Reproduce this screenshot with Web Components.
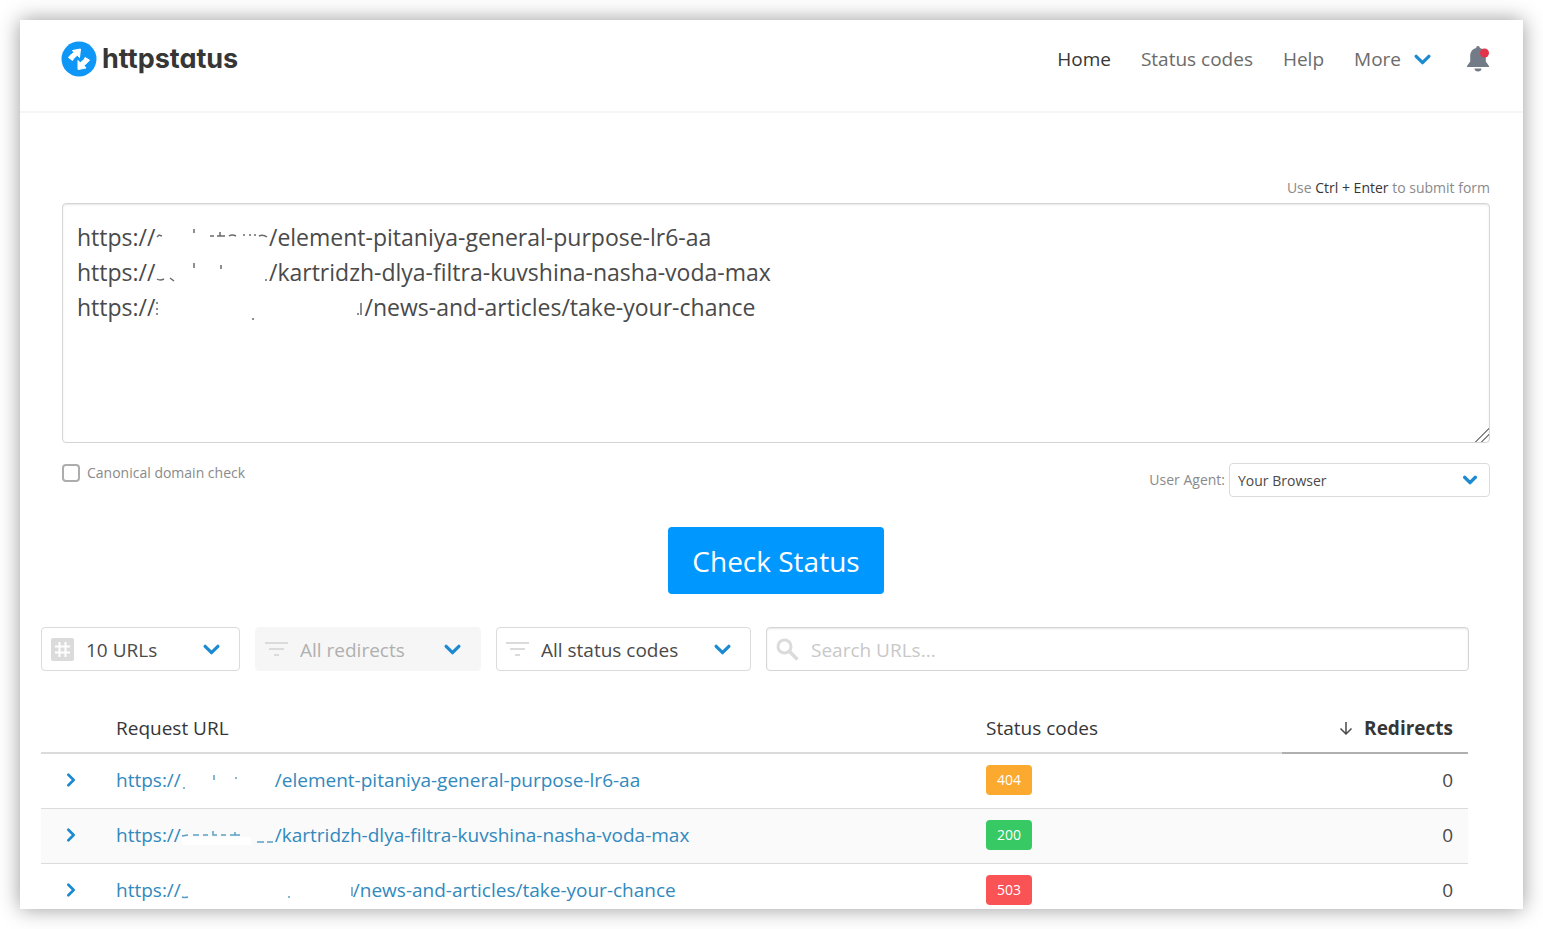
<!DOCTYPE html>
<html lang="en">
<head>
    <meta charset="UTF-8">
    <meta name="viewport" content="width=device-width, initial-scale=1.0">
    <title>httpstatus</title>
    <style>
        body {
            margin: 0;
            background: #fff;
            color: #4a4a4a;
            font-family: "Open Sans", "Noto Sans", sans-serif;
        }
    </style>
</head>
<body>
    <page-card>
        <site-header slot="header">
            <nav-link current>Home</nav-link>
            <nav-link>Status codes</nav-link>
            <nav-link>Help</nav-link>
            <nav-link more>More</nav-link>
        </site-header>
        <url-form></url-form>
        <filter-bar></filter-bar>
        <result-table></result-table>
    </page-card>

    <script>
        const chevron = (size, width = 3) => `
            <svg class="chevron" width="${size}" height="${size}" viewBox="0 0 16 16" fill="none" stroke="#1c8ad0" stroke-width="${width}" stroke-linecap="round" stroke-linejoin="round" aria-hidden="true">
                <path d="M2 5l6 6 6-6"/>
            </svg>`;

        const icons = {
            hash: `
                <svg width="23" height="23" viewBox="0 0 23 23" aria-hidden="true">
                    <rect width="23" height="23" rx="2" fill="#dbdbdb"/>
                    <path d="M8.5 4v15M14.5 4v15M4 8.5h15M4 14.5h15" stroke="#fff" stroke-width="2"/>
                </svg>`,
            filter: `
                <svg width="23" height="23" viewBox="0 0 23 23" stroke="#dbdbdb" stroke-width="2" aria-hidden="true">
                    <path d="M0 5h23M4 11h15M9 17h5"/>
                </svg>`,
            search: `
                <svg width="23" height="23" viewBox="0 0 23 23" fill="none" stroke="#dbdbdb" aria-hidden="true">
                    <circle cx="8.5" cy="8.5" r="6.5" stroke-width="3"/>
                    <path d="M13.5 13.5l8 8" stroke-width="3.5"/>
                </svg>`
        };

        class PageCard extends HTMLElement {
            constructor() {
                super();
                this.attachShadow({mode: 'open'}).innerHTML = `
                <style>
                    :host {
                        display: block;
                        box-sizing: border-box;
                        height: 100vh;
                        padding: 20px;
                        overflow: hidden;
                    }
                    .card {
                        height: 100%;
                        overflow: hidden;
                        background: #fff;
                    }
                    .shadow {
                        height: 100%;
                        box-shadow: 0 0 20px rgba(0, 0, 0, 0.4);
                    }
                </style>
                <div class="shadow">
                    <div class="card">
                        <slot name="header"></slot>
                        <main><slot></slot></main>
                    </div>
                </div>`;
            }
        }
        customElements.define('page-card', PageCard);

        class NavLink extends HTMLElement {
            constructor() {
                super();
                this.attachShadow({mode: 'open'}).innerHTML = `
                <style>
                    :host {
                        display: block;
                    }
                    a {
                        display: flex;
                        align-items: center;
                        gap: 13px;
                        color: #6b6b6b;
                        font-size: 19px;
                        line-height: 28px;
                        text-decoration: none;
                    }
                    :host([current]) a {
                        color: #363636;
                    }
                </style>
                <a href="#"><slot></slot>${this.hasAttribute('more') ? chevron(17) : ''}</a>`;
            }
        }
        customElements.define('nav-link', NavLink);

        class SiteHeader extends HTMLElement {
            constructor() {
                super();
                this.attachShadow({mode: 'open'}).innerHTML = `
                <style>
                    :host {
                        display: block;
                        border-bottom: 2px solid #f5f5f5;
                    }
                    header {
                        display: flex;
                        align-items: center;
                        justify-content: space-between;
                        padding: 18px 33px 31px 41px;
                    }
                    .logo {
                        display: flex;
                        align-items: center;
                        gap: 5px;
                        color: #363636;
                        font: 700 27px/42px Inter, sans-serif;
                        font-feature-settings: "cv11";
                        text-decoration: none;
                    }
                    nav {
                        display: flex;
                        align-items: center;
                        gap: 30px;
                    }
                    button {
                        display: block;
                        margin-left: 5px;
                        padding: 0;
                        border: 0;
                        background: none;
                    }
                    button svg {
                        display: block;
                    }
                </style>
                <header>
                    <a class="logo" href="#">
                        <svg width="36" height="36" viewBox="0 0 36 36" aria-hidden="true">
                            <circle cx="18" cy="18" r="17.5" fill="#0f97f8"/>
                            <g fill="#fff" stroke="#fff" stroke-linejoin="round">
                                <path d="M11.500 9.500l8-1.500-1 8.500-2.200-2.200-3.300 2.700-1.500 2.500-4-3 1.500-2 4-3z"/>
                                <path d="M17 19.500l2.200 2.200 3.800-3 1-2.200 4.500 2.500-2 2.500-3.500 3 2 2.500-8 1.500z"/>
                            </g>
                        </svg>
                        httpstatus
                    </a>
                    <nav>
                        <slot></slot>
                        <button type="button" aria-label="Notifications">
                            <svg width="24" height="28" viewBox="0 0 24 28" aria-hidden="true">
                                <path d="M12 1c1.200 0 1.800.8 1.800 2 3.700.8 6 4 6 8v5.500l3.200 4.500v1H1v-1l3.200-4.500V11c0-4 2.300-7.200 6-8 0-1.200.6-2 1.800-2z" fill="#747b88"/>
                                <path d="M8.500 23.500h7c0 1.800-1.500 3-3.500 3s-3.500-1.200-3.500-3z" fill="#747b88"/>
                                <circle cx="18.500" cy="8" r="4.500" fill="#e3344c"/>
                            </svg>
                        </button>
                    </nav>
                </header>`;
            }
        }
        customElements.define('site-header', SiteHeader);

        class UrlForm extends HTMLElement {
            constructor() {
                super();
                const pad = (count) => '\u00a0'.repeat(count);
                const urls = [
                    `https://${pad(19)}/element-pitaniya-general-purpose-lr6-aa`,
                    `https://${pad(19)}/kartridzh-dlya-filtra-kuvshina-nasha-voda-max`,
                    `https://${pad(35)}/news-and-articles/take-your-chance`
                ];
                this.attachShadow({mode: 'open'}).innerHTML = `
                <style>
                    :host {
                        display: block;
                        padding: 63px 33px 0 42px;
                        color: #8a8a8a;
                        font-size: 14px;
                        line-height: 24px;
                    }
                    * {
                        box-sizing: border-box;
                    }
                    .hint {
                        margin: 0 0 3px;
                        text-align: right;
                    }
                    .hint b {
                        color: #363636;
                        font-weight: 400;
                    }
                    .urls {
                        position: relative;
                    }
                    textarea {
                        display: block;
                        width: 100%;
                        height: 240px;
                        margin: 0;
                        padding: 16px 14px;
                        border: 1px solid #d5d5d5;
                        border-radius: 4px;
                        outline: 0;
                        box-shadow: inset 0 1px 2px rgba(10, 10, 10, 0.1);
                        color: #4a4a4a;
                        font: inherit;
                        font-size: 23px;
                        line-height: 35px;
                        resize: vertical;
                    }
                    textarea::-webkit-resizer {
                        background: linear-gradient(135deg, transparent 52%, #888 52% 58%, transparent 58% 72%, #888 72% 78%, transparent 78%);
                    }
                    .marks {
                        position: absolute;
                        top: 17px;
                        left: 88px;
                        pointer-events: none;
                    }
                    .options {
                        display: flex;
                        align-items: flex-start;
                        justify-content: space-between;
                        margin-top: 20px;
                    }
                    .check {
                        display: flex;
                        align-items: center;
                        gap: 7px;
                        line-height: 20px;
                    }
                    .check input {
                        appearance: none;
                        width: 18px;
                        height: 18px;
                        margin: 0;
                        border: 2px solid #adadad;
                        border-radius: 4px;
                        background: #fff;
                    }
                    .agent {
                        display: flex;
                        align-items: center;
                        gap: 4px;
                    }
                    .field {
                        display: grid;
                        align-items: center;
                        width: 261px;
                    }
                    .field select, .field svg {
                        grid-area: 1 / 1;
                    }
                    .field svg {
                        justify-self: end;
                        margin-right: 13px;
                        pointer-events: none;
                    }
                    select {
                        appearance: none;
                        height: 34px;
                        padding: 2px 8px 0;
                        border: 1px solid #dbdbdb;
                        border-radius: 4px;
                        background: #fff;
                        color: #4a4a4a;
                        font: inherit;
                    }
                    .submit {
                        display: block;
                        margin: 30px auto 0;
                        padding: 15px 24px 13px;
                        border: 0;
                        border-radius: 4px;
                        background: #0098ff;
                        color: #fff;
                        font: inherit;
                        font-size: 28px;
                        line-height: 39px;
                    }
                </style>
                <form onsubmit="return false">
                    <p class="hint">Use <b>Ctrl + Enter</b> to submit form</p>
                    <div class="urls">
                        <textarea aria-label="URLs to check" spellcheck="false">${urls.join('\n')}</textarea>
                        <svg class="marks" width="215" height="110" viewBox="150 220 215 110" fill="none" stroke="#6a6a6a" stroke-width="1.500" aria-hidden="true">
                            <path d="M157 237l2-2 3 1M194 229v4M210 236h4M217 236h8M220 232v4M229 236q3-2 7 0M243 235h2M249 235h2M254 235h2M259 236q4-2 8 1"/>
                            <path d="M157 279q3 2 7 0M170 278l4 3M194 263v5M221 265v4M265 280h2"/>
                            <path d="M156 303h2M156 309h2M157 313v2M252 319h2M357 314h2M361 303v12"/>
                        </svg>
                    </div>
                    <div class="options">
                        <label class="check"><input type="checkbox">Canonical domain check</label>
                        <div class="agent">
                            <label for="agent">User Agent:</label>
                            <div class="field">
                                <select id="agent"><option>Your Browser</option></select>
                                ${chevron(14, 4)}
                            </div>
                        </div>
                    </div>
                    <button class="submit" type="submit">Check Status</button>
                </form>`;
            }
        }
        customElements.define('url-form', UrlForm);

        class FilterSelect extends HTMLElement {
            connectedCallback() {
                const disabled = this.hasAttribute('disabled');
                const label = this.getAttribute('label');
                this.attachShadow({mode: 'open'}).innerHTML = `
                <style>
                    :host {
                        display: grid;
                        align-items: center;
                    }
                    select, svg {
                        grid-area: 1 / 1;
                    }
                    svg {
                        margin-left: 10px;
                        pointer-events: none;
                        z-index: 1;
                    }
                    .chevron {
                        justify-self: end;
                        margin-right: 20px;
                    }
                    select {
                        appearance: none;
                        box-sizing: border-box;
                        width: 100%;
                        height: 44px;
                        padding: 2px 44px 0;
                        border: 1px solid #dbdbdb;
                        border-radius: 4px;
                        background: #fff;
                        color: #4a4a4a;
                        font: inherit;
                        font-size: 19px;
                    }
                    select:disabled {
                        border-color: #f6f6f6;
                        background: #f6f6f6;
                        color: #b0b0b0;
                        opacity: 1;
                    }
                </style>
                <select aria-label="${label}" ${disabled ? 'disabled' : ''}><option>${this.getAttribute('value')}</option></select>
                ${icons[this.getAttribute('icon')]}
                ${chevron(17)}`;
            }
        }
        customElements.define('filter-select', FilterSelect);

        class FilterBar extends HTMLElement {
            constructor() {
                super();
                this.attachShadow({mode: 'open'}).innerHTML = `
                <style>
                    :host {
                        display: grid;
                        grid-template-columns: 199px 226px 255px 1fr;
                        gap: 15px;
                        padding: 33px 54px 0 21px;
                    }
                    .search {
                        display: grid;
                        align-items: center;
                    }
                    .search input, .search svg {
                        grid-area: 1 / 1;
                    }
                    .search svg {
                        margin-left: 10px;
                        z-index: 1;
                        pointer-events: none;
                    }
                    input {
                        box-sizing: border-box;
                        width: 100%;
                        height: 44px;
                        padding: 2px 44px 0;
                        border: 1px solid #d5d5d5;
                        border-radius: 4px;
                        box-shadow: inset 0 1px 2px rgba(10, 10, 10, 0.1);
                        color: #4a4a4a;
                        font: inherit;
                        font-size: 19px;
                    }
                    input::placeholder {
                        color: #c8c8c8;
                    }
                </style>
                <filter-select icon="hash" label="URLs per page" value="10 URLs"></filter-select>
                <filter-select icon="filter" label="Redirects" value="All redirects" disabled></filter-select>
                <filter-select icon="filter" label="Status codes" value="All status codes"></filter-select>
                <div class="search">
                    <input type="search" aria-label="Search URLs" placeholder="Search URLs...">
                    ${icons.search}
                </div>`;
            }
        }
        customElements.define('filter-bar', FilterBar);

        class StatusBadge extends HTMLElement {
            constructor() {
                super();
                this.attachShadow({mode: 'open'}).innerHTML = `
                <style>
                    :host {
                        display: block;
                        width: fit-content;
                        padding: 0 11px;
                        border-radius: 4px;
                        background: #36c964;
                        color: #fff;
                        font-size: 14px;
                        line-height: 30px;
                    }
                    :host([kind="warning"]) {
                        background: #fba92f;
                    }
                    :host([kind="danger"]) {
                        background: #f95356;
                    }
                </style>
                <slot></slot>`;
            }
        }
        customElements.define('status-badge', StatusBadge);

        // marks are drawn in a box as wide as the hidden host name, 20px high
        const results = [
            {
                path: '/element-pitaniya-general-purpose-lr6-aa', hidden: 94, code: 404, kind: 'warning', redirects: 0,
                marks: '<path d="M2 16h2M33 3v5M54 6h2"/>'
            },
            {
                path: '/kartridzh-dlya-filtra-kuvshina-nasha-voda-max', hidden: 94, code: 200, kind: 'success', redirects: 0,
                marks: '<path d="M1 10h69v8H1z" fill="#fff" stroke="none"/><path d="M1 9l6-1M12 8h6M22 8h5M32 4v4h4M40 8h5M49 8h10M54 5v3M76 15h7M86 15h6"/>'
            },
            {
                path: '/news-and-articles/take-your-chance', hidden: 172, code: 503, kind: 'danger', redirects: 0,
                marks: '<path d="M1 15q2 1 6 0M107 15h2M171 5v9"/>'
            }
        ];

        class ResultTable extends HTMLElement {
            constructor() {
                super();
                this.shadowDOM = this.attachShadow({mode: 'open'});
                this.render();
            }

            renderRow(row) {
                return `
                <tr>
                    <td><button type="button" aria-label="Show details">${chevron(14)}</button></td>
                    <td><a href="#">https://<svg width="${row.hidden}" height="20" fill="none" stroke="#5d9fc4" stroke-width="1.500" aria-hidden="true">${row.marks}</svg>${row.path}</a></td>
                    <td><status-badge kind="${row.kind}">${row.code}</status-badge></td>
                    <td class="number">${row.redirects}</td>
                </tr>`;
            }

            render() {
                this.shadowDOM.innerHTML = `
                <style>
                    :host {
                        display: block;
                        padding: 32px 55px 0 21px;
                        font-size: 19px;
                        line-height: 28px;
                    }
                    table {
                        width: 100%;
                        table-layout: fixed;
                        border-spacing: 0;
                    }
                    .toggle {
                        width: 60px;
                    }
                    .status {
                        width: 311px;
                    }
                    .redirects {
                        width: 186px;
                    }
                    th, td {
                        box-sizing: border-box;
                        height: 55px;
                        padding: 0 15px 2px;
                        border-bottom: 1px solid #dbdbdb;
                        text-align: left;
                        vertical-align: middle;
                    }
                    th {
                        height: 51px;
                        padding-bottom: 0;
                        border-bottom: 2px solid #dbdbdb;
                        color: #363636;
                        font-weight: 500;
                    }
                    th.sorted {
                        border-color: #b0b0b0;
                        font-weight: 700;
                    }
                    .number {
                        text-align: right;
                    }
                    .sorted svg {
                        margin-right: 6px;
                    }
                    tbody tr:nth-child(even) {
                        background: #fafafa;
                    }
                    a {
                        color: #3189bd;
                        text-decoration: none;
                        white-space: nowrap;
                    }
                    a svg {
                        vertical-align: -5px;
                    }
                    button {
                        display: block;
                        margin: 0 auto;
                        padding: 0;
                        border: 0;
                        background: none;
                    }
                    button svg {
                        display: block;
                        transform: rotate(-90deg);
                    }
                </style>
                <table>
                    <colgroup><col class="toggle"><col><col class="status"><col class="redirects"></colgroup>
                    <thead>
                        <tr>
                            <th></th>
                            <th>Request URL</th>
                            <th>Status codes</th>
                            <th class="number sorted">
                                <svg width="14" height="14" viewBox="0 0 14 14" fill="none" stroke="#4a4a4a" stroke-width="1.500" aria-hidden="true"><path d="M7 1v12M1.500 7.500L7 13l5.500-5.500"/></svg>
                                Redirects
                            </th>
                        </tr>
                    </thead>
                    <tbody>${results.map((row) => this.renderRow(row)).join('')}</tbody>
                </table>`;
            }
        }
        customElements.define('result-table', ResultTable);
    </script>
</body>
</html>
